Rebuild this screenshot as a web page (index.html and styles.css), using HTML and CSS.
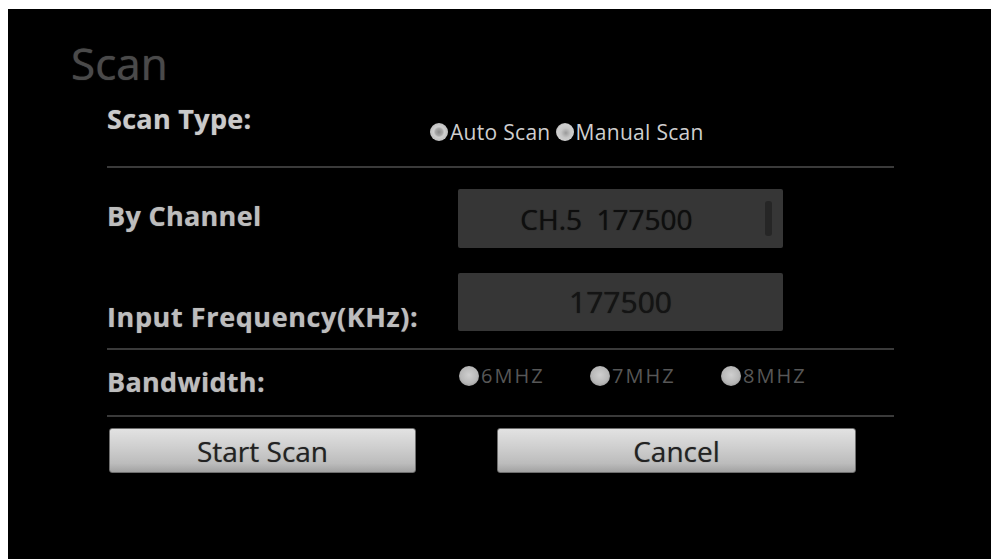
FILE: index.html
```html
<!DOCTYPE html>
<html lang="en">
<head>
<meta charset="utf-8">
<title>Scan</title>
<link rel="stylesheet" href="styles.css">
</head>
<body>
<div class="panel">
  <h1 class="title">Scan</h1>
  <div class="content">
    <div class="row row-type">
      <div class="label label-type">Scan Type:</div>
      <div class="radios-type">
        <span class="opt"><span class="radio radio-on"></span>Auto Scan</span>
        <span class="opt"><span class="radio radio-mark"></span>Manual Scan</span>
      </div>
    </div>
    <div class="sep"></div>
    <div class="row row-channel">
      <div class="label label-col">By Channel</div>
      <div class="field field-channel"><span class="field-text">CH.5&nbsp; 177500</span><span class="scroll"></span></div>
    </div>
    <div class="row row-freq">
      <div class="label label-col label-freq">Input Frequency(KHz):</div>
      <div class="field field-freq"><span class="field-text">177500</span></div>
    </div>
    <div class="sep sep-2"></div>
    <div class="row row-bw">
      <div class="label label-col">Bandwidth:</div>
      <div class="bw-opts">
        <span class="opt bw-opt"><span class="radio radio-bw"></span>6MHZ</span>
        <span class="opt bw-opt"><span class="radio radio-bw"></span>7MHZ</span>
        <span class="opt bw-opt"><span class="radio radio-bw"></span>8MHZ</span>
      </div>
    </div>
    <div class="sep"></div>
    <div class="buttons">
      <button class="btn btn-start">Start Scan</button>
      <button class="btn btn-cancel">Cancel</button>
    </div>
  </div>
</div>
</body>
</html>
```

FILE: styles.css
```css
html, body {
  margin: 0;
  padding: 0;
  background: #ffffff;
  font-family: "Open Sans", "DejaVu Sans", sans-serif;
}

.panel {
  margin: 9px 2px 0 8px;
  height: 550px;
  box-sizing: border-box;
  padding-top: 32px;
  background: #000000;
  overflow: hidden;
}

.title {
  margin: 0 0 0 63px;
  font-weight: 400;
  font-size: 44px;
  line-height: 44px;
  color: #4a4a4a;
  text-shadow: 0 0 1px #4a4a4a;
}

.content {
  margin-left: 99px;
  width: 787px;
}

.row {
  display: flex;
}

.label {
  font-weight: 700;
  font-size: 27px;
  line-height: 36px;
  color: #bdbdbd;
  letter-spacing: 0.3px;
  text-shadow: 0 0 1px rgba(190, 190, 190, 0.6);
}

.label-type {
  width: 323px;
  color: #cacaca;
}

.label-col {
  width: 351px;
  flex: none;
}

.row-type {
  height: 81px;
  box-sizing: border-box;
  padding-top: 16px;
  align-items: flex-start;
}

.radios-type {
  margin-top: 19px;
  display: flex;
  gap: 5px;
  font-size: 21px;
  line-height: 24px;
  color: #cfcfcf;
  letter-spacing: 0.3px;
}

.opt {
  display: flex;
  align-items: center;
  gap: 2px;
}

.radio {
  flex: none;
  width: 18px;
  height: 18px;
  border-radius: 50%;
  background: radial-gradient(circle at 50% 45%, #d9d9d9 0%, #c4c4c4 55%, #8f8f8f 100%);
}

.radio-on {
  background: radial-gradient(circle at 50% 50%, #8a8a8a 0%, #a8a8a8 28%, #d0d0d0 42%, #bdbdbd 75%, #8a8a8a 100%);
}

.radio-mark {
  background: radial-gradient(circle at 55% 55%, #9a9a9a 0%, #c6c6c6 35%, #cfcfcf 60%, #8f8f8f 100%);
}

.sep {
  height: 2px;
  background: #3a3a3a;
}

.row-channel {
  margin-top: 21px;
  align-items: center;
}

.row-channel .label {
  padding-bottom: 6px;
}

.field {
  position: relative;
  width: 325px;
  height: 59px;
  flex: none;
  border-radius: 2px;
  background: #363636;
  display: flex;
  align-items: center;
  justify-content: center;
  color: #0e0e0e;
  font-size: 28px;
  line-height: 32px;
  text-shadow: 0 0 1px rgba(0, 0, 0, 0.7);
}

.field-channel .field-text {
  margin-right: 28px;
}

.scroll {
  position: absolute;
  right: 11px;
  top: 12px;
  width: 7px;
  height: 35px;
  border-radius: 3px;
  background: #262626;
}

.row-freq {
  margin-top: 25px;
  align-items: flex-end;
}

.label-freq {
  line-height: 30px;
  margin-bottom: -1px;
  font-size: 27px;
  letter-spacing: 0.6px;
}

.field-freq {
  height: 58px;
  font-size: 30px;
  color: #141414;
}

.sep-2 {
  margin-top: 17px;
}

.row-bw {
  height: 65px;
  box-sizing: border-box;
  padding-top: 14px;
  align-items: flex-start;
}

.bw-opts {
  display: grid;
  grid-template-columns: 131px 131px 131px;
  padding-left: 1px;
  font-size: 20px;
  line-height: 24px;
  color: #575757;
  letter-spacing: 2px;
}

.radio-bw {
  width: 20px;
  height: 20px;
  background: radial-gradient(circle at 50% 45%, #cfcfcf 0%, #b8b8b8 55%, #808080 100%);
}

.buttons {
  margin-top: 11px;
  display: flex;
}

.btn {
  height: 45px;
  padding: 0;
  border: 1px solid #6e6e6e;
  border-radius: 3px;
  background: linear-gradient(to bottom, #e2e2e2 0%, #d0d0d0 40%, #bcbcbc 80%, #a2a2a2 100%);
  font-family: "Open Sans", "DejaVu Sans", sans-serif;
  font-size: 28px;
  line-height: 40px;
  color: #222222;
  text-shadow: 0 0 1px rgba(30, 30, 30, 0.5);
}

.btn-start {
  margin-left: 2px;
  width: 307px;
}

.btn-cancel {
  margin-left: 81px;
  width: 359px;
}
```
